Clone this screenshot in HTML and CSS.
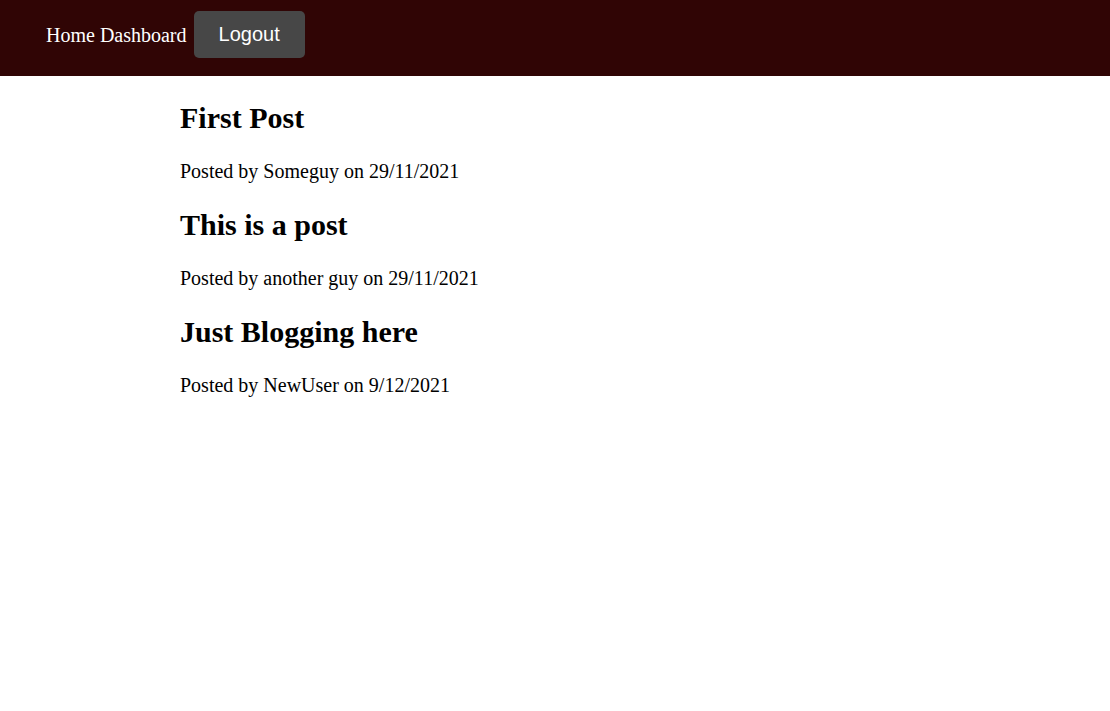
FILE: index.html
```html
<!DOCTYPE html>
<html>
<head>
<meta charset="utf-8">
<link rel="stylesheet" href="styles.css">
</head>
<body>
<header class="topbar">
  <nav class="nav">
    <a class="nav-link" href="#">Home</a>
    <a class="nav-link" href="#">Dashboard</a>
    <button class="logout">Logout</button>
  </nav>
</header>
<main class="posts">
  <article class="post">
    <h2 class="post-title">First Post</h2>
    <p class="post-meta">Posted by Someguy on 29/11/2021</p>
  </article>
  <article class="post">
    <h2 class="post-title">This is a post</h2>
    <p class="post-meta">Posted by another guy on 29/11/2021</p>
  </article>
  <article class="post">
    <h2 class="post-title">Just Blogging here</h2>
    <p class="post-meta">Posted by NewUser on 9/12/2021</p>
  </article>
</main>
</body>
</html>
```
FILE: styles.css
```css
html, body {
  margin: 0;
  padding: 0;
  background: #ffffff;
}
body {
  font-family: "Liberation Serif", "Times New Roman", serif;
  font-size: 20px;
  color: #000;
}
.topbar {
  background: #300505;
  height: 76px;
  box-sizing: border-box;
  padding: 11px 0 0 46px;
}
.nav {
  display: flex;
  align-items: center;
  height: 47px;
}
.nav-link {
  color: #ffffff;
  text-decoration: none;
  font-size: 20px;
  margin-right: 5px;
  padding-top: 2px;
}
.nav-link:last-of-type {
  margin-right: 7px;
}
.logout {
  background: #474747;
  color: #ffffff;
  border: none;
  border-radius: 5px;
  font-family: "Liberation Sans", Arial, sans-serif;
  font-size: 20px;
  height: 47px;
  padding: 0 25px;
  line-height: 23px;
}
.posts {
  max-width: 750px;
  margin: 0 auto;
}
.post-title {
  font-size: 30px;
  font-weight: bold;
  margin: 25px 0;
}
.post-meta {
  margin: 20px 0;
}
```
